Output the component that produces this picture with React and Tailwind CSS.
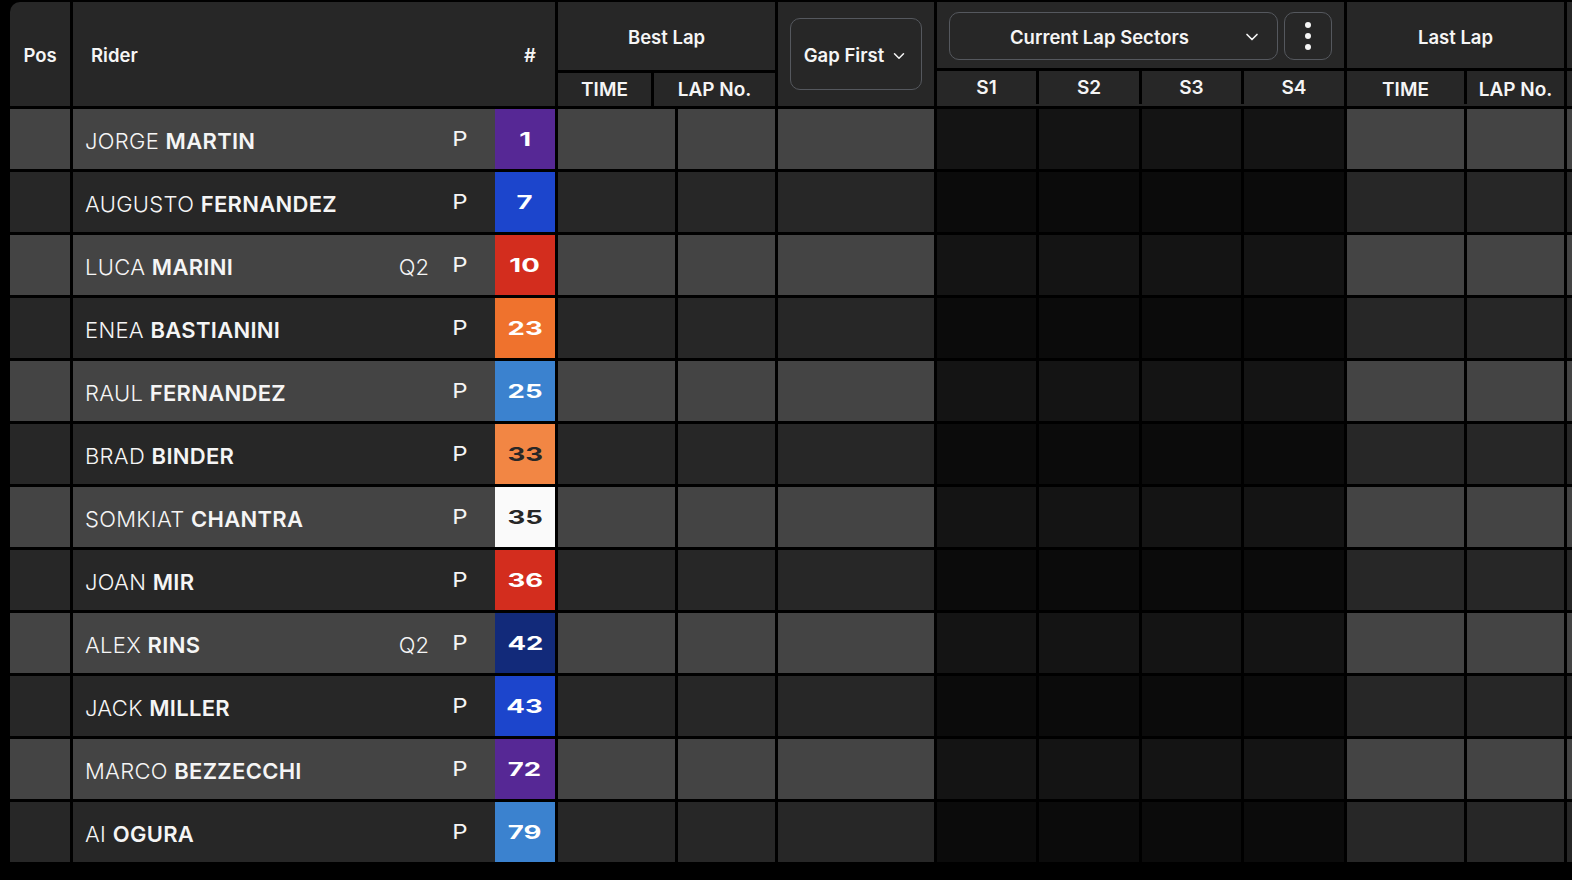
import React from "react";
import { ChevronDown } from "lucide-react";

const riders = [
  ["JORGE", "MARTIN", "", "1", "bg-[#562895]", "text-white"],
  ["AUGUSTO", "FERNANDEZ", "", "7", "bg-[#1c45cc]", "text-white"],
  ["LUCA", "MARINI", "Q2", "10", "bg-[#d32d1e]", "text-white"],
  ["ENEA", "BASTIANINI", "", "23", "bg-[#ef722d]", "text-white"],
  ["RAUL", "FERNANDEZ", "", "25", "bg-[#3b82cf]", "text-white"],
  ["BRAD", "BINDER", "", "33", "bg-[#f28644]", "text-[#272727]"],
  ["SOMKIAT", "CHANTRA", "", "35", "bg-[#fafafa]", "text-[#272727]"],
  ["JOAN", "MIR", "", "36", "bg-[#d32d1e]", "text-white"],
  ["ALEX", "RINS", "Q2", "42", "bg-[#122a7a]", "text-white"],
  ["JACK", "MILLER", "", "43", "bg-[#1c45cc]", "text-white"],
  ["MARCO", "BEZZECCHI", "", "72", "bg-[#562895]", "text-white"],
  ["AI", "OGURA", "", "79", "bg-[#3b82cf]", "text-white"],
];

function Sub({ children, className }) {
  return (
    <div className={"flex items-center justify-center bg-[#272727] text-[19px] font-semibold text-[#f5f5f5] " + className}>
      {children}
    </div>
  );
}

function Header() {
  const cls = "bg-[#272727] text-[#f5f5f5]";
  return (
    <div className="flex gap-[3px] h-[104px] text-[18.5px] font-semibold">
      <div className={cls + " w-[60px] shrink-0 rounded-tl-[10px] flex items-center justify-center pt-[4px]"}>Pos</div>
      <div className={cls + " w-[482px] shrink-0 flex items-center justify-between pl-[18px] pr-[19px] pt-[4px]"}>
        <span>Rider</span>
        <span>#</span>
      </div>
      <div className="w-[217px] shrink-0 flex flex-col gap-[3px]">
        <div className={cls + " h-[68px] flex items-center justify-center pt-[4px]"}>Best Lap</div>
        <div className="flex gap-[3px] flex-1">
          <Sub className="w-[93px] pt-[2px]">TIME</Sub>
          <Sub className="w-[121px] pt-[2px]">LAP No.</Sub>
        </div>
      </div>
      <div className={cls + " w-[156px] shrink-0 flex items-center justify-center"}>
        <div className="w-[132px] h-[72px] rounded-[10px] border border-[#55585e] flex items-center justify-center gap-[6px] pt-[4px]">
          Gap First <ChevronDown size={18} strokeWidth={2} />
        </div>
      </div>
      <div className="w-[407px] shrink-0 flex flex-col gap-[3px]">
        <div className={cls + " h-[66px] flex items-center gap-[6px] pl-[12px] pt-[2px]"}>
          <div className="relative w-[329px] h-[48px] rounded-[10px] border border-[#55585e] flex items-center justify-center pr-[28px] pt-[4px]">
            Current Lap Sectors
            <ChevronDown size={20} strokeWidth={2} className="absolute right-[15px] top-[14px]" />
          </div>
          <div className="w-[48px] h-[48px] rounded-[10px] border border-[#55585e] flex flex-col items-center justify-center gap-[5px]">
            <span className="w-[6px] h-[6px] rounded-full bg-[#f5f5f5]" />
            <span className="w-[6px] h-[6px] rounded-full bg-[#f5f5f5]" />
            <span className="w-[6px] h-[6px] rounded-full bg-[#f5f5f5]" />
          </div>
        </div>
        <div className="flex-1 bg-[#272727] pb-[2px]">
          <div className="h-full flex gap-[3px] bg-black">
            <Sub className="w-[99px] pt-[1px]">S1</Sub>
            <Sub className="w-[100px] pt-[1px]">S2</Sub>
            <Sub className="w-[99px] pt-[1px]">S3</Sub>
            <Sub className="w-[100px] pt-[1px]">S4</Sub>
          </div>
        </div>
      </div>
      <div className="w-[217px] shrink-0 flex flex-col gap-[3px]">
        <div className={cls + " h-[66px] flex items-center justify-center pt-[6px]"}>Last Lap</div>
        <div className="flex-1 bg-[#272727] pb-[2px]">
          <div className="h-full flex gap-[3px] bg-black">
            <Sub className="w-[117px] pt-[5px]">TIME</Sub>
            <Sub className="w-[97px] pt-[5px]">LAP No.</Sub>
          </div>
        </div>
      </div>
      <div className="w-[100px] shrink-0 flex flex-col gap-[3px]">
        <div className={cls + " h-[66px]"} />
        <div className={cls + " flex-1"} />
      </div>
    </div>
  );
}

function Row({ r, i }) {
  const light = i % 2 === 0;
  const bg = light ? "bg-[#444444]" : "bg-[#272727]";
  const dark = light ? "bg-[#141414]" : "bg-[#0b0b0b]";
  return (
    <div className="flex gap-[3px] h-[60px]">
      <div className={bg + " w-[60px] shrink-0"} />
      <div className={bg + " w-[482px] shrink-0 flex items-center"}>
        <div className="flex-1 pl-[12px] pt-[5px] text-[22px] font-light text-[#f5f5f5] whitespace-nowrap tracking-[0.3px]">
          {r[0]} <span className="font-semibold">{r[1]}</span>
        </div>
        {r[2] && <span className="text-[22px] font-light text-[#f5f5f5] pt-[5px] mr-[23px]">{r[2]}</span>}
        <span className="w-[16px] mr-[27px] text-[20px] leading-none text-center text-[#f5f5f5] scale-x-[1.2]">P</span>
        <div className={r[4] + " " + r[5] + " w-[60px] h-full flex items-center justify-center pt-[1px]"}>
          <span className="text-[19px] font-bold leading-none scale-x-[1.45]">{r[3]}</span>
        </div>
      </div>
      {[117, 97, 156].map((w) => (
        <div key={w} style={{ width: w }} className={bg + " shrink-0"} />
      ))}
      {[99, 100, 99, 100].map((w, k) => (
        <div key={k} style={{ width: w }} className={dark + " shrink-0"} />
      ))}
      {[117, 97, 100].map((w) => (
        <div key={w} style={{ width: w }} className={bg + " shrink-0"} />
      ))}
    </div>
  );
}

export default function App() {
  return (
    <div className="w-[1572px] h-[880px] overflow-hidden bg-black pt-[2px] pl-[10px] [font-family:Inter,sans-serif]">
      <div className="flex flex-col gap-[3px]">
        <Header />
        {riders.map((r, i) => (
          <Row key={r[3]} r={r} i={i} />
        ))}
      </div>
    </div>
  );
}
